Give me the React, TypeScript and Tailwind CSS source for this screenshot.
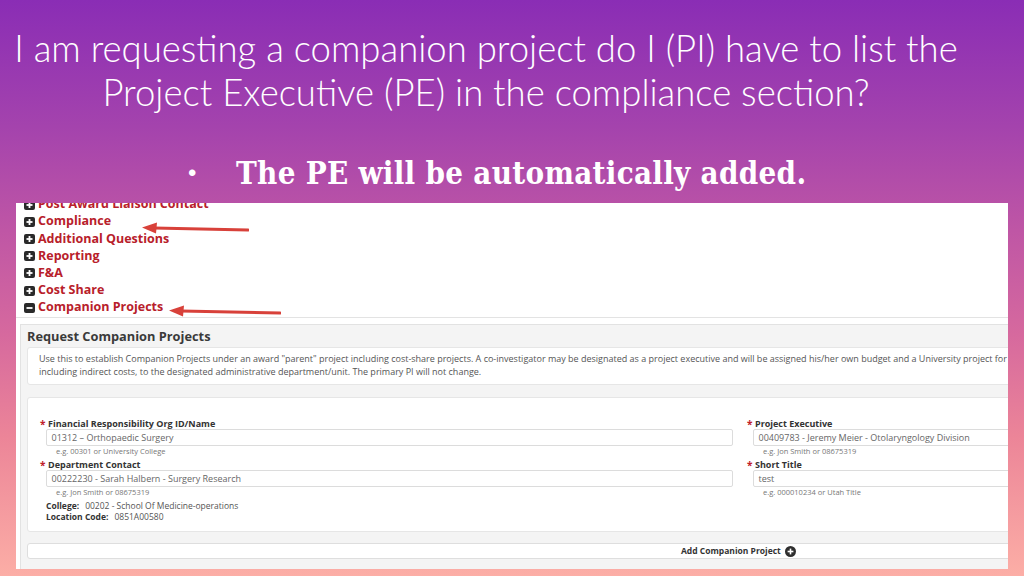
import React from "react";

const sections = [
  { label: "Post Award Liaison Contact", open: false },
  { label: "Compliance", open: false },
  { label: "Additional Questions", open: false },
  { label: "Reporting", open: false },
  { label: "F&A", open: false },
  { label: "Cost Share", open: false },
  { label: "Companion Projects", open: true },
];

function ToggleIcon({ open }: { open: boolean }) {
  return (
    <svg width="11" height="10" viewBox="0 0 11 10" className="shrink-0">
      <rect x="0" y="0" width="11" height="10" rx="2" fill="#2a2a2a" />
      <rect x="2.5" y="4.1" width="6" height="1.8" fill="#fff" />
      {!open && <rect x="4.6" y="2" width="1.8" height="6" fill="#fff" />}
    </svg>
  );
}

function PlusCircle() {
  return (
    <svg width="11" height="11" viewBox="0 0 11 11" className="shrink-0">
      <circle cx="5.5" cy="5.5" r="5.5" fill="#2e2e2e" />
      <rect x="2.6" y="4.7" width="5.8" height="1.6" fill="#fff" />
      <rect x="4.7" y="2.6" width="1.6" height="5.8" fill="#fff" />
    </svg>
  );
}

function Arrow({ w }: { w: number }) {
  // red callout arrow pointing left
  return (
    <svg width={w} height="14" viewBox={`0 0 ${w} 14`}>
      <line x1="12" y1="7" x2={w - 1} y2="9" stroke="#d8413a" strokeWidth="3" strokeLinecap="round" />
      <polygon points={`0,6.5 15,1.5 14,12.5`} fill="#d8413a" />
    </svg>
  );
}

function Field({ label, value, hint }: { label: string; value: string; hint: string }) {
  return (
    <div className="flex flex-col">
      <div className="flex h-[11px] items-center text-[9px] font-bold leading-[11px] text-[#333]">
        <span className="w-[8px] text-[10px] leading-[8px] text-[#c0202a]">*</span>
        <span>{label}</span>
      </div>
      <div className="ml-[5.5px] flex h-[17px] items-center rounded-[2px] border border-[#dcdcdc] bg-white pl-[5px] text-[9px] text-[#666]">
        {value}
      </div>
      <div className="ml-[16px] h-[10px] text-[7.5px] leading-[10px] text-[#777]">{hint}</div>
    </div>
  );
}

export default function App() {
  return (
    <div className="relative h-[576px] w-[1024px] overflow-hidden bg-[linear-gradient(180deg,#8a2db5_0%,#a443ad_22%,#bf56a5_40%,#d6699e_58%,#ec8598_76%,#fcaea6_100%)]">
      {/* title */}
      <div className="w-[972px] pt-[26px] text-center font-['Lato',sans-serif] text-[36.5px] font-light leading-[44px] text-white">
        <p>I am requesting a companion project do I (PI) have to list the</p>
        <p>Project Executive (PE) in the compliance section?</p>
      </div>

      {/* bullet */}
      <div className="mt-[39px] flex h-[40px] items-center pl-[188px] font-['DejaVu_Serif_Condensed','DejaVu_Serif',serif] text-[31px] font-bold tracking-[0.3px] text-white">
        <span className="w-[48px] font-['Liberation_Sans',sans-serif] text-[24px] font-normal">•</span>
        <span>The PE will be automatically added.</span>
      </div>

      {/* embedded screenshot */}
      <div className="relative mt-[10px] ml-[16px] h-[366px] w-[992px] overflow-hidden bg-white font-['Open_Sans',sans-serif]">
        <div className="-mt-[7px] border-b border-[#e3e3e3] pb-[1px]">
          {sections.map((s) => (
            <div key={s.label} className="flex h-[17.2px] items-center gap-[3px] pl-[8px] text-[12.5px] font-bold text-[#b8202a]">
              <ToggleIcon open={s.open} />
              <span>{s.label}</span>
            </div>
          ))}
        </div>

        <div className="mt-[6px] ml-[4px] w-[1100px] border border-[#e2e2e2] bg-[#f4f4f4] px-[6px] pb-[10px]">
          <div className="flex h-[22px] items-center text-[12.8px] font-bold text-[#3a3a3a]">
            Request Companion Projects
          </div>

          <div className="h-[38px] rounded-[3px] border border-[#e6e6e6] bg-white px-[11px] py-[5px] text-[9px] leading-[12.5px] whitespace-nowrap text-[#555]">
            <p>
              Use this to establish Companion Projects under an award "parent" project including cost-share projects. A
              co-investigator may be designated as a project executive and will be assigned his/her own budget and a
              University project for
            </p>
            <p>including indirect costs, to the designated administrative department/unit. The primary PI will not change.</p>
          </div>

          <div className="mt-[12px] h-[135px] rounded-[3px] border border-[#e6e6e6] bg-white pt-[20px] pl-[12px]">
            <div className="flex">
              <div className="flex w-[707px] shrink-0 flex-col">
                <div className="w-[693px]">
                  <Field
                    label="Financial Responsibility Org ID/Name"
                    value="01312 – Orthopaedic Surgery"
                    hint="e.g. 00301 or University College"
                  />
                  <div className="mt-[3px]">
                    <Field
                      label="Department Contact"
                      value="00222230 - Sarah Halbern - Surgery Research"
                      hint="e.g. Jon Smith or 08675319"
                    />
                  </div>
                </div>
                <div className="mt-[4px] pl-[6px] text-[8.5px] leading-[10.5px] text-[#555]">
                  <p>
                    <span className="mr-[6px] font-bold text-[#333]">College:</span>00202 - School Of
                    Medicine-operations
                  </p>
                  <p>
                    <span className="mr-[6px] font-bold text-[#333]">Location Code:</span>0851A00580
                  </p>
                </div>
              </div>
              <div className="w-[380px] shrink-0">
                <Field
                  label="Project Executive"
                  value="00409783 - Jeremy Meier - Otolaryngology Division"
                  hint="e.g. Jon Smith or 08675319"
                />
                <div className="mt-[3px]">
                  <Field label="Short Title" value="test" hint="e.g. 000010234 or Utah Title" />
                </div>
              </div>
            </div>
          </div>

          <div className="mt-[11px] flex h-[16px] items-center gap-[4px] rounded-[3px] border border-[#dedede] bg-white pl-[653px] text-[8.5px] font-bold text-[#333]">
            <span>Add Companion Project</span>
            <PlusCircle />
          </div>
        </div>

        {/* callout arrows */}
        <div className="absolute top-[18px] left-[126px]">
          <Arrow w={107} />
        </div>
        <div className="absolute top-[101px] left-[153px]">
          <Arrow w={112} />
        </div>
      </div>
    </div>
  );
}
